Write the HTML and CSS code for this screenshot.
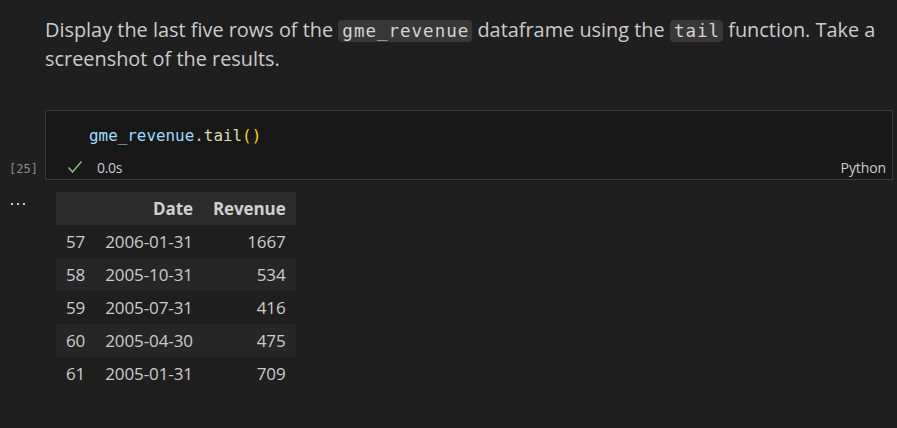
FILE: index.html
```html
<!DOCTYPE html>
<html>
<head>
<meta charset="utf-8">
<link rel="stylesheet" href="styles.css">
</head>
<body>
<div class="page">
  <div class="md">
    <p>Display the last five rows of the <code>gme_revenue</code> dataframe using the <code>tail</code> function. Take a screenshot of the results.</p>
  </div>
  <div class="cell">
    <div class="gutter"><span class="count">[25]</span></div>
    <div class="editor">
      <div class="code"><span class="var">gme_revenue</span><span class="dot">.</span><span class="fn">tail</span><span class="paren">()</span></div>
      <div class="status">
        <svg class="check" width="16" height="14" viewBox="0 0 16 14"><path d="M1.5 7.5 L5.5 12 L14.5 1.5" fill="none" stroke="#89d185" stroke-width="1.3"/></svg>
        <span class="time">0.0s</span>
        <span class="lang">Python</span>
      </div>
    </div>
  </div>
  <div class="output">
    <div class="gutter2"><span class="more"><i></i><i></i><i></i></span></div>
    <table class="df">
      <thead>
        <tr><th></th><th>Date</th><th>Revenue</th></tr>
      </thead>
      <tbody>
        <tr><td class="idx">57</td><td>2006-01-31</td><td>1667</td></tr>
        <tr><td class="idx">58</td><td>2005-10-31</td><td>534</td></tr>
        <tr><td class="idx">59</td><td>2005-07-31</td><td>416</td></tr>
        <tr><td class="idx">60</td><td>2005-04-30</td><td>475</td></tr>
        <tr><td class="idx">61</td><td>2005-01-31</td><td>709</td></tr>
      </tbody>
    </table>
  </div>
</div>
</body>
</html>
```
FILE: styles.css
```css
html, body {
  margin: 0;
  padding: 0;
  background: #1f1f1f;
  width: 897px;
  height: 428px;
  overflow: hidden;
}
.page {
  font-family: "Open Sans", "Noto Sans", sans-serif;
  color: #cccccc;
}
.md {
  padding: 16px 0 0 45px;
  width: 885px;
  height: 97px;
  box-sizing: border-box;
}
.md p {
  margin: 0;
  font-size: 19.9px;
  line-height: 28px;
  color: #cccccc;
  letter-spacing: 0;
}
.md code {
  font-family: "DejaVu Sans Mono", monospace;
  font-size: 17.5px;
  letter-spacing: 1px;
  background: #383838;
  border-radius: 4px;
  padding: 1px 3px 1px 4px;
  color: #d4d4d4;
}
.cell {
  display: flex;
  margin-top: 13px;
}
.gutter {
  width: 45px;
  flex: none;
  display: flex;
  align-items: flex-end;
  justify-content: flex-start;
}
.count {
  font-family: "DejaVu Sans Mono", monospace;
  font-size: 12px;
  color: #8b8b8b;
  padding: 0 0 4px 9px;
}
.editor {
  width: 848px;
  height: 70px;
  box-sizing: border-box;
  background: #181818;
  border: 1px solid #3b3b3b;
  display: flex;
  flex-direction: column;
}
.code {
  font-family: "DejaVu Sans Mono", monospace;
  font-size: 15.9px;
  line-height: 20px;
  padding: 15px 0 0 43px;
  height: 45px;
  box-sizing: border-box;
}
.var { color: #9cdcfe; }
.dot { color: #cccccc; }
.fn { color: #dcdcaa; }
.paren { color: #ffd700; }
.status {
  display: flex;
  align-items: center;
  height: 22px;
  padding-left: 21px;
  font-size: 14px;
  color: #cccccc;
}
.check { margin-right: 14px; }
.time { flex: 1; letter-spacing: -0.3px; }
.lang { padding-right: 6px; letter-spacing: -0.1px; }
.output {
  display: flex;
  margin-top: 12px;
}
.gutter2 {
  width: 56px;
  flex: none;
}
.more {
  display: flex;
  gap: 4px;
  padding: 11px 0 0 11px;
}
.more i {
  display: block;
  width: 2px;
  height: 2px;
  background: #cccccc;
}
.df {
  border-collapse: collapse;
  font-size: 17px;
  color: #cccccc;
  letter-spacing: -0.1px;
}
.df th, .df td {
  height: 33px;
  padding: 0 10px;
  text-align: right;
}
.df th {
  font-weight: 700;
  background: #2b2b2b;
  color: #d0d0d0;
}
.df td.idx { text-align: left; }
.df tbody tr:nth-child(even) { background: #262626; }
```
